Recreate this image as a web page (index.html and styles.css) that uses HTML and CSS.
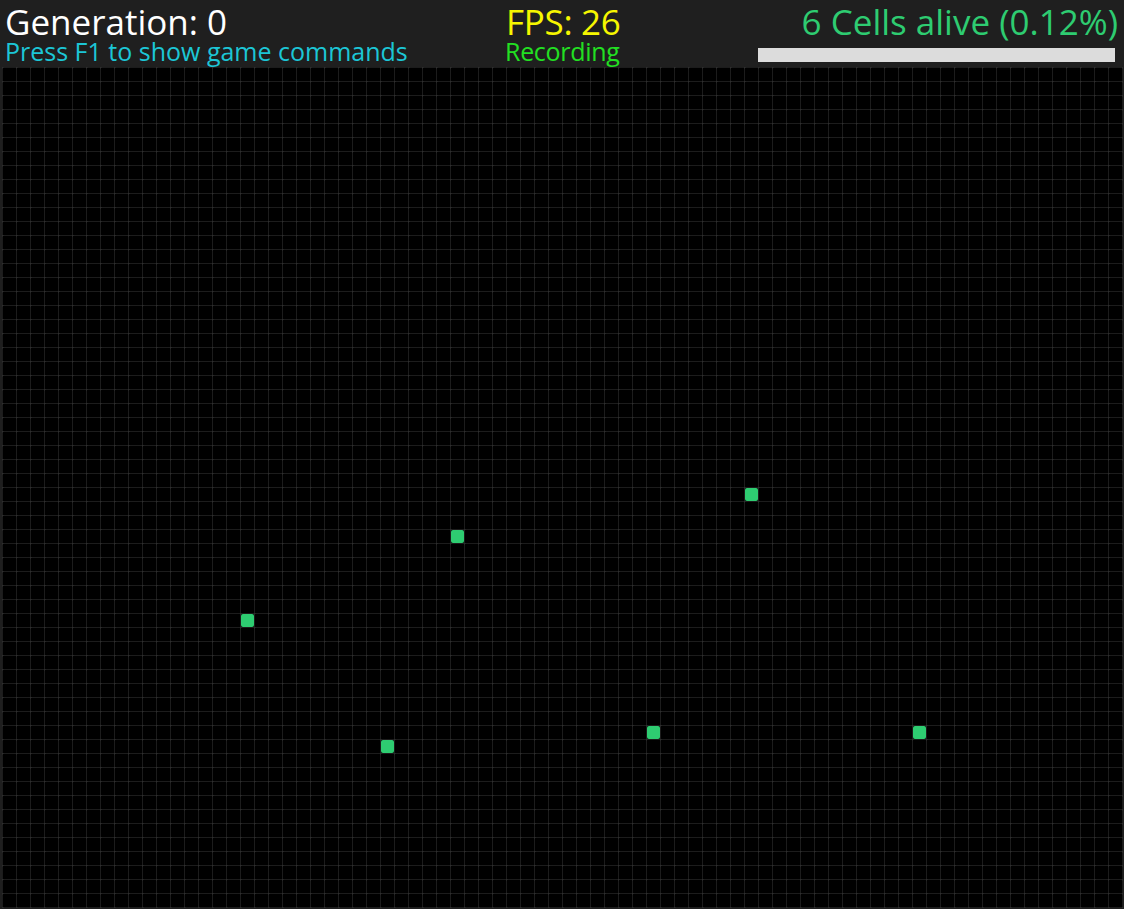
FILE: index.html
```html
<!DOCTYPE html>
<html>
<head>
<meta charset="utf-8">
<link rel="stylesheet" href="styles.css">
</head>
<body>
<div class="app">
  <header class="hud">
    <div class="col col-left">
      <div class="title">Generation: 0</div>
      <div class="hint">Press F1 to show game commands</div>
    </div>
    <div class="col col-mid">
      <div class="fps">FPS: 26</div>
      <div class="rec">Recording</div>
    </div>
    <div class="col col-right">
      <div class="alive">6 Cells alive (0.12%)</div>
      <div class="bar"><div class="bar-fill" style="width:100%"></div></div>
    </div>
  </header>
  <main class="board">
    <div class="cell" style="grid-column:18;grid-row:40"></div>
    <div class="cell" style="grid-column:33;grid-row:34"></div>
    <div class="cell" style="grid-column:54;grid-row:31"></div>
    <div class="cell" style="grid-column:28;grid-row:49"></div>
    <div class="cell" style="grid-column:47;grid-row:48"></div>
    <div class="cell" style="grid-column:66;grid-row:48"></div>
  </main>
</div>
</body>
</html>
```

FILE: styles.css
```css
html, body {
  margin: 0;
  padding: 0;
  background: #1f1f1f;
  overflow: hidden;
}
.app {
  width: 1124px;
  height: 909px;
  display: flex;
  flex-direction: column;
  font-family: "Open Sans", "Noto Sans", sans-serif;
}
.hud {
  height: 67px;
  display: flex;
  box-sizing: border-box;
  padding: 0 6px 0 5px;
}
.col {
  display: flex;
  flex-direction: column;
}
.col-left {
  width: 500px;
}
.col-mid {
  width: 200px;
}
.col-right {
  flex: 1;
  align-items: flex-end;
}
.title,
.fps,
.alive {
  font-size: 35px;
  line-height: 35px;
  height: 35px;
  padding-top: 4px;
  white-space: nowrap;
}
.hint,
.rec {
  font-size: 25px;
  line-height: 24px;
  height: 24px;
  white-space: nowrap;
}
.title {
  color: #ffffff;
}
.hint {
  color: #1cc6d6;
}
.fps {
  color: #f6f600;
  margin-left: 1px;
  letter-spacing: -0.3px;
}
.rec {
  color: #22e022;
  letter-spacing: -0.3px;
}
.alive {
  color: #2ecc71;
}
.bar {
  width: 357px;
  height: 14px;
  margin-top: 9px;
  margin-right: 3px;
  background: #1f1f1f;
}
.bar-fill {
  height: 100%;
  background: #dcdcdc;
}
.board {
  margin-left: 2px;
  width: 1121px;
  height: 841px;
  box-sizing: border-box;
  padding: 1px 0 0 1px;
  display: grid;
  grid-template-columns: repeat(80, 14px);
  grid-template-rows: repeat(60, 14px);
  background-color: #000;
  background-image:
    radial-gradient(circle at 0.5px 0.5px, #2e2e2e 0.8px, transparent 1.2px),
    linear-gradient(to right, #1c1c1c 1px, transparent 1px),
    linear-gradient(to bottom, #1c1c1c 1px, transparent 1px);
  background-size: 14px 14px;
}
.cell {
  margin: 0 1px 1px 0;
  background: #2ecc71;
  border-radius: 2px;
}
```
